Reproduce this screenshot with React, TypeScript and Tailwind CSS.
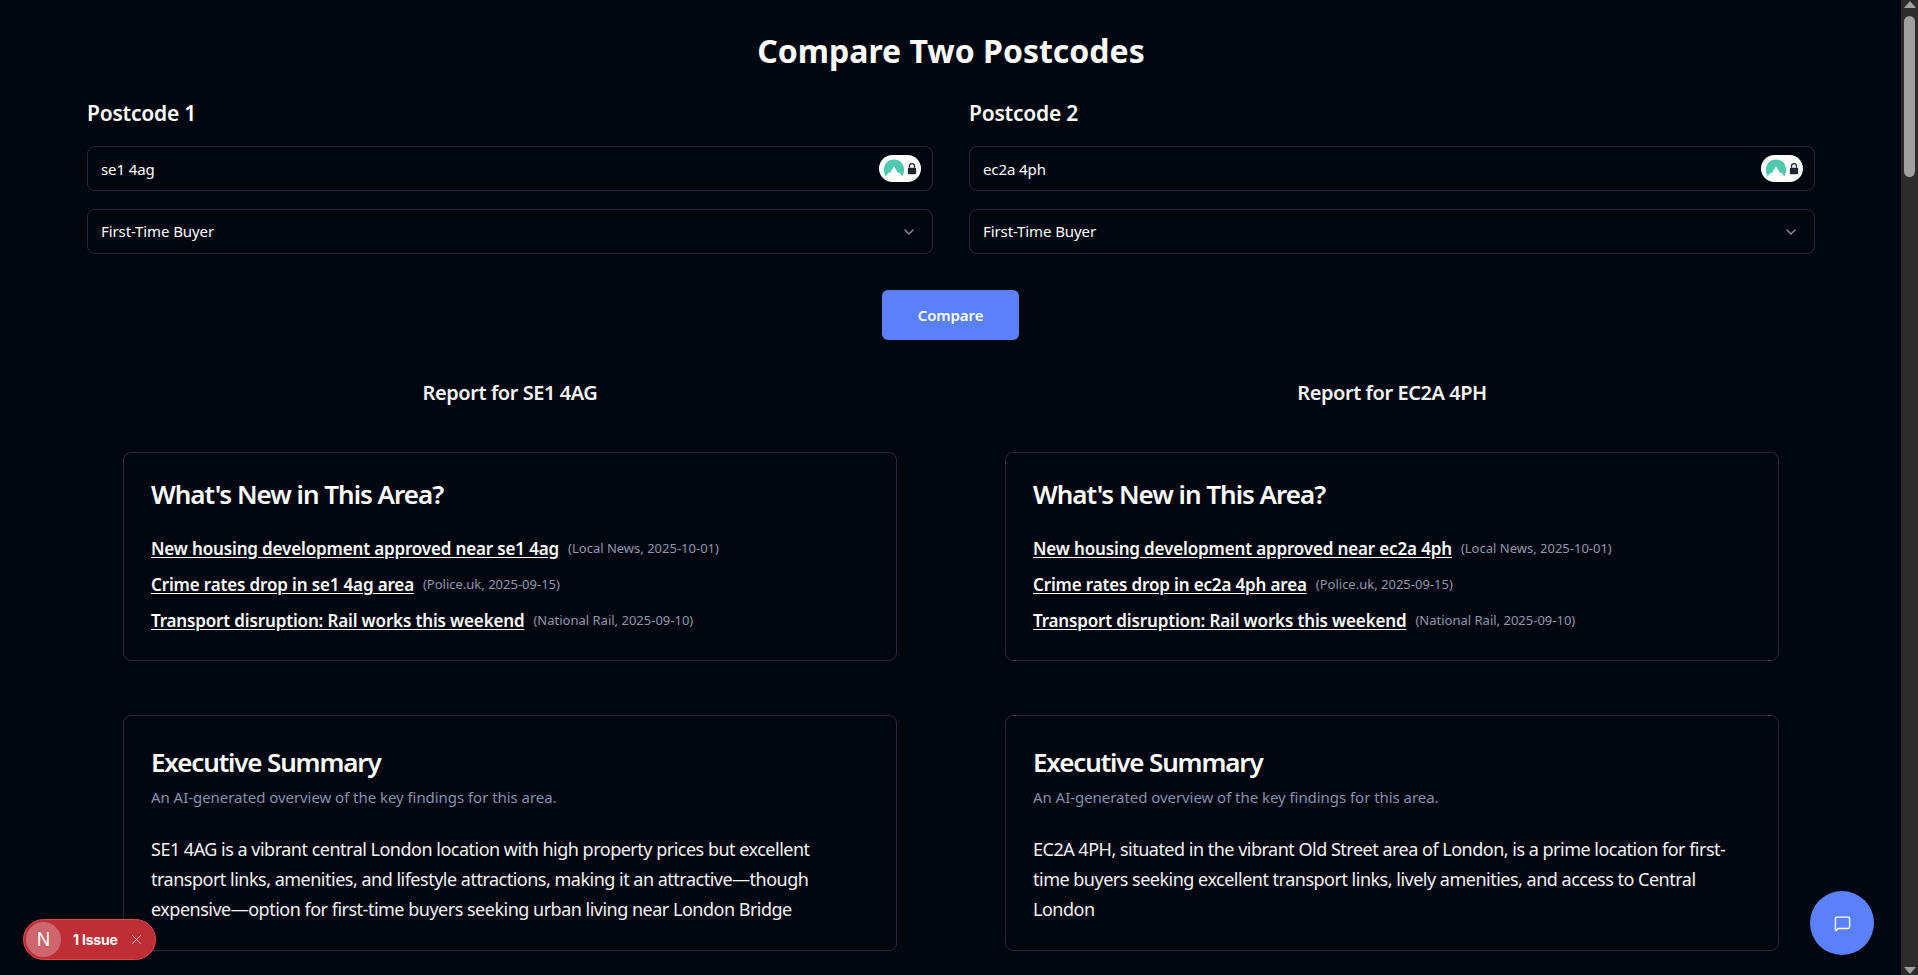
import { ChevronDown, MessageSquare, X } from 'lucide-react';

const font = { fontFamily: "'Noto Sans', sans-serif" };

function VpnBadge() {
  return (
    <div className="flex h-[27px] w-[42px] items-center justify-center gap-[2px] rounded-full bg-white">
      <svg viewBox="0 0 24 24" className="h-[22px] w-[22px]">
        <path
          d="M3 20C1.500 17.500 1 15 1 12.500 1 6 6 1.500 12 1.500S23 6 23 12.500c0 2.500-.5 5-2 7.500l-3.500-4.500-1 1L12 9l-4.500 7.500-1-1z"
          fill="#4ec9ad"
        />
      </svg>
      <svg viewBox="0 0 12 14" className="h-[13px] w-[10px]">
        <path d="M3 6V4a3 3 0 0 1 6 0v2" fill="none" stroke="#1f2430" strokeWidth="1.500" />
        <rect x="1" y="6" width="10" height="8" rx="1.500" fill="#1f2430" />
      </svg>
    </div>
  );
}

function PostcodeForm({ label, value }: { label: string; value: string }) {
  return (
    <div className="flex-1">
      <h2 className="mb-[18px] text-[21px] font-semibold leading-[30px] tracking-[-0.2px] text-white">{label}</h2>
      <div className="mb-[18px] flex h-[45px] items-center justify-between rounded-lg border border-[#232838] pl-[13px] pr-[11px] text-[15px] tracking-[-0.1px] text-white">
        <span className="pt-[2px]">{value}</span>
        <VpnBadge />
      </div>
      <div className="flex h-[45px] items-center justify-between rounded-lg border border-[#232838] pl-[13px] pr-[15px] text-[15px] tracking-[-0.1px] text-white">
        <span>First-Time Buyer</span>
        <ChevronDown className="h-4 w-4 text-[#8a8f9c]" />
      </div>
    </div>
  );
}

function NewsItem({ title, meta }: { title: string; meta: string }) {
  return (
    <li className="flex h-[36px] items-center gap-[9px]">
      <a className="text-[17px] font-semibold tracking-[-0.15px] text-white underline underline-offset-2">{title}</a>
      <span className="text-[13px] tracking-[0px] text-[#8f97a6]">{meta}</span>
    </li>
  );
}

function Report({ code, lower, summary }: { code: string; lower: string; summary: string }) {
  return (
    <div className="flex-1">
      <h3 className="mb-[44px] text-center text-[20px] font-semibold leading-[30px] tracking-[-0.45px] text-[#f4f5f7]">
        Report for {code}
      </h3>
      <div className="mx-[36px]">
        <section className="mb-[54px] h-[209px] rounded-lg border border-[#232838] px-[27px] pt-[23px]">
          <h4 className="mb-[19px] text-[26px] font-semibold leading-[36px] tracking-[-1px] text-white">What's New in This Area?</h4>
          <ul>
            <NewsItem title={`New housing development approved near ${lower}`} meta="(Local News, 2025-10-01)" />
            <NewsItem title={`Crime rates drop in ${lower} area`} meta="(Police.uk, 2025-09-15)" />
            <NewsItem title="Transport disruption: Rail works this weekend" meta="(National Rail, 2025-09-10)" />
          </ul>
        </section>
        <section className="h-[236px] overflow-hidden rounded-lg border border-[#232838] px-[27px] pt-[28px]">
          <h4 className="text-[26px] font-semibold leading-[36px] tracking-[-1.15px] text-white">Executive Summary</h4>
          <p className="mb-[25px] mt-[5px] text-[15px] leading-[24px] tracking-[-0.05px] text-[#8292a8]">An AI-generated overview of the key findings for this area.</p>
          <p className="text-[18px] leading-[30px] tracking-[-0.5px] text-[#f4f5f7]">{summary}</p>
        </section>
      </div>
    </div>
  );
}

export default function App() {
  return (
    <div className="relative flex h-[975px] overflow-hidden bg-[#02060f]" style={font}>
      <main className="flex-1 overflow-hidden pl-[87px] pr-[86px] pt-[27px]">
        <h1 className="mb-[23px] text-center text-[32px] font-bold leading-[48px] tracking-[0px] text-white">Compare Two Postcodes</h1>
        <div className="flex gap-[36px]">
          <PostcodeForm label="Postcode 1" value="se1 4ag" />
          <PostcodeForm label="Postcode 2" value="ec2a 4ph" />
        </div>
        <div className="mb-[38px] mt-[36px] flex justify-center pr-[1px]">
          <button className="h-[50px] w-[137px] rounded-md bg-[#5a80fb] text-[15px] font-semibold tracking-[-0.1px] text-white">Compare</button>
        </div>
        <div className="flex gap-[36px]">
          <Report
            code="SE1 4AG"
            lower="se1 4ag"
            summary="SE1 4AG is a vibrant central London location with high property prices but excellent transport links, amenities, and lifestyle attractions, making it an attractive—though expensive—option for first-time buyers seeking urban living near London Bridge"
          />
          <Report
            code="EC2A 4PH"
            lower="ec2a 4ph"
            summary="EC2A 4PH, situated in the vibrant Old Street area of London, is a prime location for first-time buyers seeking excellent transport links, lively amenities, and access to Central London"
          />
        </div>
      </main>

      {/* scrollbar */}
      <aside className="flex w-[17px] flex-col items-center bg-[#2c2c2c]">
        <div className="mt-[1px] h-0 w-0 border-x-[6px] border-b-[7px] border-x-transparent border-b-[#a0a0a0]" />
        <div className="mt-[8px] h-[161px] w-[11px] rounded-full bg-[#9f9f9f]" />
        <div className="mb-[1px] mt-auto h-0 w-0 border-x-[6px] border-t-[7px] border-x-transparent border-t-[#a0a0a0]" />
      </aside>

      {/* dev indicator */}
      <div className="absolute bottom-[15px] left-[23px] flex h-[41px] w-[133px] items-center rounded-full border border-[#cf4a52] bg-[#bf2d37] pl-[2px] text-white">
        <span className="flex h-[35px] w-[35px] items-center justify-center rounded-full bg-[#cf666d] text-[18px]" style={{ fontFamily: "Inter, sans-serif" }}>N</span>
        <span className="ml-[12px] text-[14px] font-bold tracking-[-0.2px]" style={{ fontFamily: "Inter, sans-serif" }}>1 Issue</span>
        <X className="ml-[11px] h-[15px] w-[15px]" strokeWidth={1.5} />
      </div>

      {/* chat button */}
      <button className="absolute bottom-[20px] right-[44px] flex h-[64px] w-[64px] items-center justify-center rounded-full bg-[#5a80fb] text-white">
        <MessageSquare className="h-[17px] w-[17px]" />
      </button>
    </div>
  );
}
